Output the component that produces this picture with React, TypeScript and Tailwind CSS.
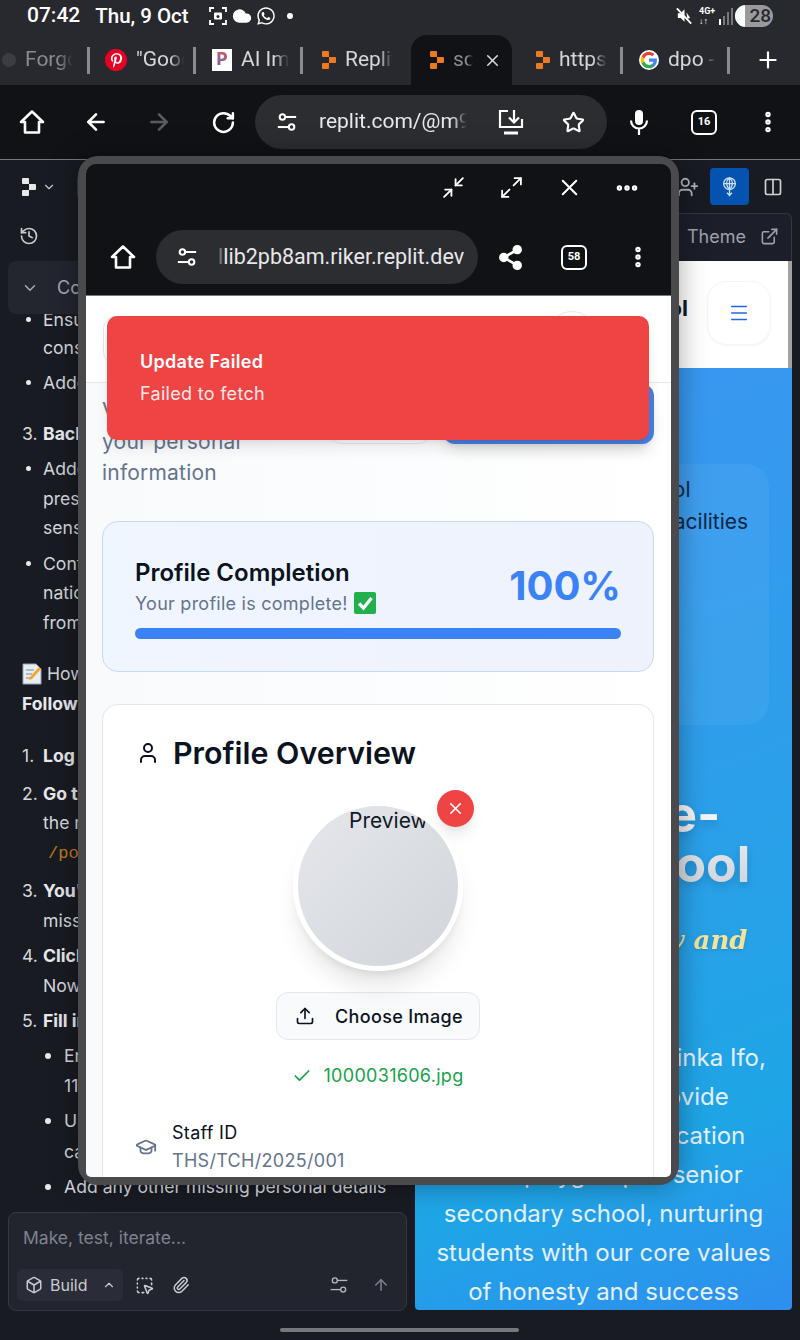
import { FC, ReactNode } from "react";
import {
  ArrowLeft,
  ArrowRight,
  ArrowUp,
  Box,
  Check,
  ChevronDown,
  ChevronUp,
  Cloud,
  Columns2,
  Ellipsis,
  EllipsisVertical,
  ExternalLink,
  GraduationCap,
  History,
  Maximize2,
  Menu,
  Minimize2,
  Paperclip,
  Plus,
  RotateCw,
  Share2,
  SquareDashedMousePointer,
  Star,
  Upload,
  User,
  UserPlus,
  X,
} from "lucide-react";
import { FaPinterestP, FaWhatsapp } from "react-icons/fa";

const ReplitLogo: FC<{ className?: string }> = ({ className }) => (
  <svg viewBox="0 0 14 18" className={className} fill="currentColor">
    <path d="M0 1a1 1 0 0 1 1-1h5a1 1 0 0 1 1 1v5H1a1 1 0 0 1-1-1z" />
    <path d="M7 6h6a1 1 0 0 1 1 1v4a1 1 0 0 1-1 1H7z" />
    <path d="M1 12h6v5a1 1 0 0 1-1 1H1a1 1 0 0 1-1-1v-4a1 1 0 0 1 1-1z" />
  </svg>
);

const TuneIcon: FC<{ className?: string; thin?: boolean }> = ({ className, thin }) => (
  <svg viewBox="0 0 24 24" className={className} fill="none" stroke="currentColor" strokeWidth={thin ? 1.6 : 2.2}>
    <circle cx="7" cy="6.500" r="3" />
    <path d="M10 6.500h12" />
    <circle cx="17" cy="17.500" r="3" />
    <path d="M2 17.500h12" />
  </svg>
);

const HomeIcon: FC<{ className?: string }> = ({ className }) => (
  <svg viewBox="0 0 26 26" className={className} fill="none" stroke="white" strokeWidth="2.600" strokeLinejoin="round">
    <path d="M13 2.500 24 13h-4v10.500H6V13H2z" />
  </svg>
);

const MicIcon: FC<{ className?: string }> = ({ className }) => (
  <svg viewBox="0 0 24 26" className={className} fill="none" stroke="white" strokeWidth="2.200">
    <rect x="8" y="1" width="8" height="15" rx="4" fill="white" stroke="none" />
    <path d="M4 11.500a8 8 0 0 0 16 0M12 20v6" />
  </svg>
);

const GoogleLogo: FC = () => (
  <svg viewBox="0 0 24 24" className="w-[20px] h-[20px] rounded-full bg-white p-[1px]">
    <path fill="#4285F4" d="M22.600 12.200c0-.8-.1-1.500-.2-2.200H12v4.200h5.900a5 5 0 0 1-2.200 3.300v2.800h3.500c2.100-1.900 3.400-4.800 3.400-8.100z" />
    <path fill="#34A853" d="M12 23c3 0 5.400-1 7.200-2.700l-3.500-2.800c-1 .7-2.200 1.100-3.700 1.100-2.900 0-5.300-1.900-6.200-4.500H2.200v2.800A11 11 0 0 0 12 23z" />
    <path fill="#FBBC05" d="M5.800 14.100a6.600 6.600 0 0 1 0-4.200V7.100H2.200a11 11 0 0 0 0 9.800z" />
    <path fill="#EA4335" d="M12 5.400c1.600 0 3.100.6 4.200 1.600l3.100-3.100A11 11 0 0 0 2.200 7.100l3.600 2.800C6.700 7.300 9.100 5.400 12 5.400z" />
  </svg>
);

const TabCount: FC<{ value: number }> = ({ value }) => (
  <div className="w-[26px] h-[25px] rounded-[6px] border-2 border-white flex items-center justify-center text-white text-[11px] font-bold font-['Roboto',sans-serif]">
    {value}
  </div>
);

const fade = "[mask-image:linear-gradient(to_right,black_70%,transparent)] overflow-hidden whitespace-nowrap";

const StatusBar = () => (
  <div className="h-[35px] bg-[#28292e] flex items-center pb-[3px] pl-[27px] pr-[27px] text-white font-['Roboto',sans-serif] font-medium">
    <span className="text-[21px]">07:42</span>
    <span className="text-[20.5px] ml-[15px]">Thu, 9 Oct</span>
    <svg viewBox="0 0 20 20" className="w-[20px] h-[20px] ml-[19px]" fill="none" stroke="white" strokeWidth="1.800">
      <path d="M6 2H2v4M14 2h4v4M6 18H2v-4M14 18h4v-4" />
      <rect x="6" y="6.500" width="8" height="7" rx="1" fill="white" stroke="none" />
      <circle cx="10" cy="10.500" r="1.500" fill="#28292e" stroke="none" />
    </svg>
    <Cloud className="w-[20px] h-[20px] ml-[4px]" fill="white" />
    <FaWhatsapp className="w-[20px] h-[20px] ml-[4px]" />
    <div className="w-[6px] h-[6px] rounded-full bg-white ml-[11px]" />
    <div className="flex-1" />
    <svg viewBox="0 0 20 20" className="w-[19px] h-[20px]" fill="white">
      <path d="M3 7h3l4-4v13l-4-4H3zM12 6l4 6-3 1z" />
      <path d="M2 2l15 16" stroke="white" strokeWidth="2" />
    </svg>
    <div className="ml-[5px] w-[17px] text-[9px] leading-[10px] font-bold">4G+<br />↓↑</div>
    <svg viewBox="0 0 16 18" className="w-[16px] h-[18px] ml-[2px]" fill="#77787c">
      <rect x="1" y="12" width="2" height="6" fill="#fff" />
      <rect x="5" y="9" width="2" height="9" />
      <rect x="9" y="5" width="2" height="13" />
      <rect x="13" y="1" width="2" height="17" />
    </svg>
    <div className="ml-[1px] w-[38px] h-[22px] rounded-full bg-[#9a9a9c] overflow-hidden flex items-center justify-end pr-[2px] text-[19px] text-[#28292e] relative">
      <div className="absolute left-0 top-0 bottom-0 w-[10px] bg-white" />
      <span>28</span>
    </div>
  </div>
);

const Tab: FC<{ title: string; icon: ReactNode; dim?: boolean; divider?: boolean; w: string }> = ({
  title,
  icon,
  dim,
  divider,
  w,
}) => (
  <div className={`${w} h-[30px] flex items-center justify-between shrink-0`}>
    <div className="flex items-center gap-[9px] flex-1 pl-[16px] min-w-0">
      {icon}
      <span className={`${fade} w-[48px] text-[21px] font-['Roboto',sans-serif] ${dim ? "text-[#8a8b8e]" : "text-[#d6d7d9]"}`}>
        {title}
      </span>
    </div>
    {divider && <div className="w-[3px] h-[27px] bg-[#8a8b8e]" />}
  </div>
);

const TabStrip = () => (
  <div className="h-[50px] bg-[#28292e] flex items-center">
    <Tab w="w-[90px]" dim divider title="Forgot" icon={<div className="w-[14px] h-[14px] rounded-full bg-[#3c3d42] -ml-[14px]" />} />
    <Tab
      w="w-[106px]"
      divider
      title={'"Good'}
      icon={
        <div className="w-[22px] h-[22px] rounded-full bg-[#e60023] text-white flex items-center justify-center shrink-0 -ml-[1px]">
          <FaPinterestP className="w-[13px] h-[15px]" />
        </div>
      }
    />
    <Tab
      w="w-[107px]"
      divider
      title="AI Image"
      icon={
        <div className="w-[20px] h-[22px] bg-white text-[17px] font-extrabold flex items-center justify-center shrink-0">
          <span className="bg-linear-to-b from-[#e8502a] to-[#3b4fd8] bg-clip-text text-transparent">P</span>
        </div>
      }
    />
    <Tab w="w-[108px]" title="Replit" icon={<ReplitLogo className="w-[14px] h-[18px] text-[#ee7a1f] ml-[3px] shrink-0" />} />
    <div className="w-[101px] h-[50px] rounded-t-[16px] bg-[#111216] flex items-center shrink-0 pl-[19px]">
      <ReplitLogo className="w-[14px] h-[18px] text-[#ee7a1f] shrink-0" />
      <span className={`${fade} ml-[9px] w-[20px] text-[21px] text-[#8a8b8e] font-['Roboto',sans-serif]`}>school</span>
      <X className="w-[19px] h-[19px] ml-[10px] text-[#d6d7d9]" />
    </div>
    <Tab w="w-[111px]" divider title="https://" icon={<ReplitLogo className="w-[14px] h-[18px] text-[#ee7a1f] ml-[8px] shrink-0" />} />
    <Tab w="w-[107px]" divider title="dpo - Google" icon={<GoogleLogo />} />
    <Plus className="w-[26px] h-[26px] text-white ml-[25px]" />
  </div>
);

const Toolbar = () => (
  <div className="h-[75px] bg-[#111216] border-b border-[#77787c] flex items-center text-white">
    <HomeIcon className="w-[26px] h-[26px] ml-[19px]" />
    <ArrowLeft className="w-[26px] h-[26px] ml-[38px]" strokeWidth={2.4} />
    <ArrowRight className="w-[26px] h-[26px] ml-[37px] text-[#5a5b5f]" strokeWidth={2.4} />
    <RotateCw className="w-[25px] h-[25px] ml-[39px]" strokeWidth={2.4} />
    <div className="ml-[19px] w-[352px] h-[54px] rounded-full bg-[#2c2d31] flex items-center pl-[21px]">
      <TuneIcon className="w-[22px] h-[22px]" />
      <span className="ml-[21px] w-[148px] text-[21px] font-['Roboto',sans-serif] whitespace-nowrap overflow-hidden text-[#e8e8ea] [mask-image:linear-gradient(to_right,black_90%,transparent)]">
        replit.com/@m9ab
      </span>
      <svg viewBox="0 0 26 26" className="w-[26px] h-[26px] ml-[31px]" fill="none" stroke="white" strokeWidth="2.200">
        <path d="M10 2H2v16h22V10" />
        <path d="M16 1v12M11 8.500l5 5 5-5" />
        <path d="M6 24h14" strokeWidth="3" />
      </svg>
      <Star className="w-[23px] h-[23px] ml-[38px]" strokeWidth={2.2} />
    </div>
    <MicIcon className="w-[24px] h-[26px] ml-[20px]" />
    <div className="ml-[40px]"><TabCount value={16} /></div>
    <EllipsisVertical className="w-[26px] h-[26px] ml-[38px]" strokeWidth={3} />
  </div>
);

const ReplitTopBar = () => (
  <div className="h-[53px] flex items-center text-[#c8cad0]">
    <ReplitLogo className="w-[14px] h-[18px] ml-[22px] text-[#e8e8ea]" />
    <ChevronDown className="w-[14px] h-[14px] ml-[6px]" />
    <div className="ml-[21px] w-[12px] h-[24px] rounded-l-[4px] border border-[#333742]" />
    <div className="flex-1" />
    <UserPlus className="w-[22px] h-[22px] text-[#aeb1b8]" />
    <div className="ml-[11px] w-[39px] h-[37px] rounded-[4px] bg-[#0553b1] flex items-center justify-center">
      <svg viewBox="0 0 20 24" className="w-[17px] h-[20px]" fill="none" stroke="#c9def7" strokeWidth="1.600">
        <circle cx="10" cy="8" r="7" />
        <path d="M3 8h14M10 1v22M10 1c-6 5-3 11 0 14 3-3 6-9 0-14z" />
        <path d="M7 19l3 3 3-3" />
      </svg>
    </div>
    <Columns2 className="w-[20px] h-[20px] ml-[14px] mr-[17px] text-[#d0d2d8]" />
  </div>
);

type Line = { label?: string; text: string; kind: "bullet" | "plain" | "num" | "sub" | "subplain" | "code" | "note" | "bold"; gap: string };

const chatLines: Line[] = [
  { kind: "bullet", text: "Ensure", gap: "" },
  { kind: "plain", text: "consistent", gap: "-mt-px" },
  { kind: "bullet", text: "Added", gap: "mt-[6px]" },
  { kind: "num", label: "3.", text: "Backend", gap: "mt-[22px]" },
  { kind: "bullet", text: "Added", gap: "mt-[6px]" },
  { kind: "plain", text: "present", gap: "mt-px" },
  { kind: "plain", text: "sensitive", gap: "" },
  { kind: "bullet", text: "Confirm", gap: "mt-[7px]" },
  { kind: "plain", text: "national", gap: "" },
  { kind: "plain", text: "from", gap: "mt-px" },
  { kind: "note", text: "How", gap: "mt-[22px]" },
  { kind: "bold", text: "Follow", gap: "mt-px" },
  { kind: "num", label: "1.", text: "Log in", gap: "mt-[23px]" },
  { kind: "num", label: "2.", text: "Go to", gap: "mt-[9px]" },
  { kind: "plain", text: "the main", gap: "" },
  { kind: "code", text: "/portal", gap: "mt-[2px]" },
  { kind: "num", label: "3.", text: "You'll", gap: "mt-[8px]" },
  { kind: "plain", text: "missing", gap: "mt-px" },
  { kind: "num", label: "4.", text: "Click", gap: "mt-[6px]" },
  { kind: "plain", text: "Now", gap: "mt-px" },
  { kind: "num", label: "5.", text: "Fill in", gap: "mt-[6px]" },
  { kind: "sub", text: "Enter", gap: "mt-[6px]" },
  { kind: "subplain", text: "11", gap: "mt-px" },
  { kind: "sub", text: "Upload", gap: "mt-[6px]" },
  { kind: "subplain", text: "camera", gap: "mt-[2px]" },
  { kind: "sub", text: "Add any other missing personal details", gap: "mt-[6px]" },
];

const ChatLine: FC<{ line: Line }> = ({ line }) => {
  const { kind, text, label, gap } = line;
  return (
    <div className={`h-[29px] leading-[29px] flex items-center whitespace-nowrap text-[17.6px] text-[#d5d7dc] shrink-0 ${gap}`}>
      {kind === "bullet" && (
        <>
          <div className="w-[5px] h-[5px] rounded-full bg-[#e8e9ec] ml-[26px] mr-[12px]" />
          <span>{text}</span>
        </>
      )}
      {kind === "plain" && <span className="ml-[43px]">{text}</span>}
      {kind === "num" && (
        <>
          <span className="ml-[22px] w-[21px]">{label}</span>
          <span className="font-bold text-[#e8e9ec]">{text}</span>
        </>
      )}
      {kind === "sub" && (
        <>
          <div className="w-[6px] h-[6px] rounded-full bg-[#e8e9ec] ml-[45px] mr-[13px]" />
          <span>{text}</span>
        </>
      )}
      {kind === "subplain" && <span className="ml-[64px]">{text}</span>}
      {kind === "code" && <span className="ml-[48px] font-['Liberation_Mono',monospace] text-[#c27a1e] text-[17px]">{text}</span>}
      {kind === "note" && (
        <>
          <svg viewBox="0 0 20 22" className="w-[20px] h-[22px] ml-[22px] mr-[5px]">
            <path d="M1 1h13l5 5v15H1z" fill="#e8edf2" stroke="#9aa3ad" strokeWidth="1" />
            <path d="M4 7h8M4 11h6M4 15h5" stroke="#7b8794" strokeWidth="1" />
            <path d="M17 4l2 2-9 10-3 1 1-3z" fill="#f5a524" />
          </svg>
          <span>{text}</span>
        </>
      )}
      {kind === "bold" && <span className="ml-[22px] font-bold text-[#e8e9ec]">{text}</span>}
    </div>
  );
};

const Composer = () => (
  <div className="mx-[8px] mb-[29px] h-[99px] rounded-[8px] border border-[#343844] bg-[#22252e] shrink-0 flex flex-col">
    <div className="pl-[14px] pt-[12px] text-[17.5px] leading-[26px] text-[#7f838d]">Make, test, iterate...</div>
    <div className="flex items-center mt-[18px] ml-[8px] mr-[16px]">
      <div className="w-[106px] h-[32px] rounded-[6px] bg-[#2a2d37] flex items-center pl-[8px] text-[#c8cad0]">
        <Box className="w-[18px] h-[18px]" />
        <span className="ml-[7px] text-[16px]">Build</span>
        <ChevronUp className="w-[14px] h-[14px] ml-[15px]" />
      </div>
      <SquareDashedMousePointer className="w-[19px] h-[19px] ml-[12px] text-[#c8cad0]" />
      <Paperclip className="w-[18px] h-[18px] ml-[18px] text-[#c8cad0]" />
      <div className="flex-1" />
      <TuneIcon thin className="w-[20px] h-[20px] text-[#b4b7bf]" />
      <ArrowUp className="w-[18px] h-[18px] ml-[23px] text-[#7f838d]" />
    </div>
  </div>
);

const ChatPanel = () => (
  <div className="w-[415px] h-full flex flex-col shrink-0">
    <div className="h-[48px] flex items-center pl-[19px] shrink-0">
      <History className="w-[20px] h-[20px] text-[#c8cad0] -mt-[2px]" />
    </div>
    <div className="relative z-10 ml-[8px] w-[110px] h-[53px] rounded-[8px] bg-[#23262f] flex items-center pl-[13px] text-[#a7aab2] shrink-0 overflow-hidden">
      <ChevronDown className="w-[18px] h-[18px] shrink-0" />
      <span className="ml-[18px] text-[18px] whitespace-nowrap">Context</span>
    </div>
    <div className="flex-1 flex flex-col -mt-[9px] overflow-hidden">
      {chatLines.map((line, i) => (
        <ChatLine key={i} line={line} />
      ))}
    </div>
    <Composer />
  </div>
);

const PreviewPanel = () => (
  <div className="flex-1 mr-[8px] mb-[30px] flex flex-col min-w-0">
    <div className="h-[48px] rounded-t-[6px] border border-b-0 border-[#333742] bg-[#1c1f29] flex items-center justify-end pb-[3px] text-[#9ea1a9] shrink-0">
      <span className="text-[18px]">Theme</span>
      <ExternalLink className="w-[19px] h-[19px] ml-[14px] mr-[12px]" />
    </div>
    <div className="h-[107px] flex bg-white shrink-0">
      <div className="flex-1 flex items-start justify-end pr-[17px] pt-[20px]">
        <span className="text-[22px] font-bold text-[#111827] mt-[11px] mr-[19px]">High School</span>
        <div className="w-[64px] h-[64px] rounded-[20px] shadow-[0_1px_3px_rgba(0,0,0,0.04)] border border-[#f5f5f6] bg-white flex items-center justify-center">
          <Menu className="w-[22px] h-[22px] text-[#2563eb]" strokeWidth={1.6} />
        </div>
      </div>
      <div className="w-[4px] bg-[#a3a3a6]" />
    </div>
    <div className="flex-1 rounded-b-[4px] overflow-hidden bg-linear-160 from-[#3b95f1] via-[#1ea5e6] via-80% to-[#2e8eee] flex flex-col items-center text-center min-h-0">
      <div className="mt-[96px] w-[335px] h-[261px] ml-[-1px] rounded-[24px] bg-white/5 shrink-0 self-start translate-x-[20px] pt-[10px] text-left text-[21px] leading-[32px] text-[#0f2744] pl-[16px] whitespace-nowrap">
        A fine secondary school
        <br />
        with modern learning facilities
      </div>
      <h1 className="mt-[64px] text-[50px] leading-[50px] font-bold bg-linear-to-b from-white to-[#cfd4da] bg-clip-text text-transparent shrink-0 drop-shadow-lg whitespace-nowrap">
        Heritage-
        <br />
        High School
      </h1>
      <p className="mt-[33px] font-['DejaVu_Serif',serif] italic font-bold text-[26px] leading-[36px] text-[#f5e39a] shrink-0 drop-shadow whitespace-nowrap">
        Learning, Grow and
        <br />
        Succeed
      </p>
      <p className="mt-[44px] text-[24px] leading-[39px] text-[#e4f0fa] whitespace-nowrap shrink-0">
        Led by Chief Mrs. Orinka Ifo,
        <br />
        our educators provide
        <br />
        an exceptional education
        <br />
        from playgroup to senior
        <br />
        secondary school, nurturing
        <br />
        students with our core values
        <br />
        of honesty and success
      </p>
    </div>
  </div>
);

const PopupChrome = () => (
  <div className="h-[132px] bg-[#111216] border-b border-[#77787c] text-white shrink-0">
    <div className="h-[46px] flex items-center justify-end pr-[31px] pt-[1px]">
      <Minimize2 className="w-[25px] h-[25px]" strokeWidth={1.8} />
      <Maximize2 className="w-[25px] h-[25px] ml-[33px]" strokeWidth={1.8} />
      <X className="w-[27px] h-[27px] ml-[32px]" strokeWidth={1.8} />
      <Ellipsis className="w-[26px] h-[26px] ml-[31px]" strokeWidth={3} />
    </div>
    <div className="flex items-center mt-[20px]">
      <HomeIcon className="w-[26px] h-[26px] ml-[24px]" />
      <div className="ml-[20px] w-[322px] h-[54px] rounded-full bg-[#2c2d31] flex items-center pl-[20px] overflow-hidden">
        <TuneIcon className="w-[22px] h-[22px] shrink-0" />
        <span className="ml-[20px] text-[21.5px] font-['Roboto',sans-serif] whitespace-nowrap text-[#e8e8ea]">
          <span className="text-[#77787c]">l</span>lib2pb8am.riker.replit.dev
        </span>
      </div>
      <Share2 className="w-[27px] h-[27px] ml-[19px]" fill="white" strokeWidth={2.4} />
      <div className="ml-[37px]"><TabCount value={58} /></div>
      <EllipsisVertical className="w-[26px] h-[26px] ml-[38px]" strokeWidth={3} />
    </div>
  </div>
);

const CheckEmoji = () => (
  <svg viewBox="0 0 22 22" className="w-[22px] h-[22px] inline-block ml-[6px] align-[-4px]">
    <rect width="22" height="22" rx="2" fill="#22b04c" />
    <path d="M5 11.500l4.500 4.500L17.500 6" fill="none" stroke="white" strokeWidth="3.200" />
  </svg>
);

const ProfileCompletion = () => (
  <div className="mt-[33px] ml-[16px] mr-[17px] rounded-[16px] border border-[#c3daf5] bg-linear-to-r from-[#f0f6ff] to-[#edf2fd] px-[32px] pt-[32px] pb-[32px]">
    <div className="flex items-center justify-between">
      <div>
        <h2 className="text-[24px] leading-[37px] font-semibold text-[#0b1220]">Profile Completion</h2>
        <p className="text-[18px] leading-[26px] tracking-[0.25px] text-[#64748b]">
          Your profile is complete!
          <CheckEmoji />
        </p>
      </div>
      <span className="text-[40px] font-bold text-[#3b82f6]">100%</span>
    </div>
    <div className="mt-[11px] h-[11px] rounded-full bg-[#3b82f6]" />
  </div>
);

const ProfileOverview = () => (
  <div className="mt-[32px] ml-[16px] mr-[17px] rounded-t-[16px] border border-b-0 border-[#e5e7eb] bg-white h-[474px] shrink-0 flex flex-col px-[32px] pt-[32px]">
    <div className="flex items-center">
      <User className="w-[24px] h-[24px] text-[#0b1220] ml-[1px]" />
      <h2 className="ml-[13px] text-[30.4px] leading-[32px] font-semibold text-[#0b1220]">Profile Overview</h2>
    </div>
    <div className="relative self-center mt-[32px] shrink-0">
      <div className="w-[170px] h-[170px] rounded-full border-[5px] border-white shadow-xl overflow-hidden bg-linear-to-br from-[#e5e7eb] to-[#d1d5db] pl-[51px] pt-[1px] text-[21px] text-[#111827] leading-[28px] whitespace-nowrap">
        Preview
      </div>
      <div className="absolute left-[144px] -top-[11px] w-[37px] h-[37px] rounded-full bg-[#ef4444] shadow-lg flex items-center justify-center">
        <X className="w-[19px] h-[19px] text-white" />
      </div>
    </div>
    <div className="self-center mt-[21px] w-[204px] h-[48px] rounded-[12px] border border-[#e2e8f0] bg-[#f8fafc] flex items-center pl-[18px] text-[#0b1220]">
      <Upload className="w-[20px] h-[20px]" />
      <span className="ml-[20px] text-[18px] font-medium tracking-[0.35px] whitespace-nowrap">Choose Image</span>
    </div>
    <div className="self-center mt-[23px] flex items-center text-[#16a34a] text-[18px] leading-[26px] tracking-[0.3px]">
      <Check className="w-[20px] h-[20px] mr-[11px]" />
      1000031606.jpg
    </div>
    <div className="flex items-center mt-[30px]">
      <GraduationCap className="w-[22px] h-[22px] text-[#64748b]" />
      <div className="ml-[15px] tracking-[0.3px]">
        <div className="text-[18px] leading-[28px] text-[#0b1220]">Staff ID</div>
        <div className="text-[18px] leading-[28px] text-[#64748b]">THS/TCH/2025/001</div>
      </div>
    </div>
  </div>
);

const PopupPage = () => (
  <div className="relative flex-1 overflow-hidden bg-linear-to-r from-[#f8fafc] to-white min-h-0 flex flex-col">
    <div className="h-[87px] bg-white border-b border-[#e5e7eb] flex items-start justify-between px-[17px] pt-[20px] shrink-0">
      <div className="w-[120px] h-[48px] rounded-[12px] border border-[#e5e7eb]" />
      <div className="w-[48px] h-[48px] rounded-full border border-[#e5e7eb] -mt-[5px] mr-[58px]" />
    </div>
    <div className="flex items-start justify-between ml-[16px] mr-[17px] shrink-0">
      <p className="w-[170px] mt-[12px] text-[21px] leading-[31px] tracking-[0.2px] text-[#64748b]">
        View and edit your personal information
      </p>
      <div className="flex gap-[12px]">
        <div className="w-[102px] h-[60px] rounded-[12px] border border-[#e5e7eb] bg-white mt-[1px]" />
        <div className="w-[211px] h-[60px] rounded-[12px] bg-[#4a7de0] shadow-lg mt-[1px]" />
      </div>
    </div>
    <ProfileCompletion />
    <ProfileOverview />
    <div className="absolute left-[21px] top-[20px] w-[542px] h-[124px] rounded-[10px] bg-[#ef4444] shadow-lg text-white pl-[33px] pt-[33px] tracking-[0.3px]">
      <div className="text-[18px] leading-[26px] font-semibold">Update Failed</div>
      <div className="text-[18px] leading-[26px] mt-[6px] text-[#fde8e8]">Failed to fetch</div>
    </div>
  </div>
);

const Popup = () => (
  <div className="absolute left-[78px] top-[156px] w-[601px] h-[1029px] rounded-[20px] p-[8px] bg-[#4a4a4c] shadow-[0_0_28px_rgba(0,0,0,0.35)] flex flex-col z-20">
    <div className="flex-1 min-h-0 rounded-t-[10px] rounded-b-[5px] overflow-hidden flex flex-col">
      <PopupChrome />
      <PopupPage />
    </div>
  </div>
);

export default function App() {
  return (
    <div className="relative w-[800px] h-[1340px] overflow-hidden bg-[#191b23] font-['Inter',sans-serif] flex flex-col">
      <StatusBar />
      <TabStrip />
      <Toolbar />
      <ReplitTopBar />
      <div className="flex-1 flex min-h-0">
        <ChatPanel />
        <PreviewPanel />
      </div>
      <div className="absolute left-[280px] bottom-[8px] w-[239px] h-[4px] rounded-full bg-[#77787c]" />
      <Popup />
    </div>
  );
}
